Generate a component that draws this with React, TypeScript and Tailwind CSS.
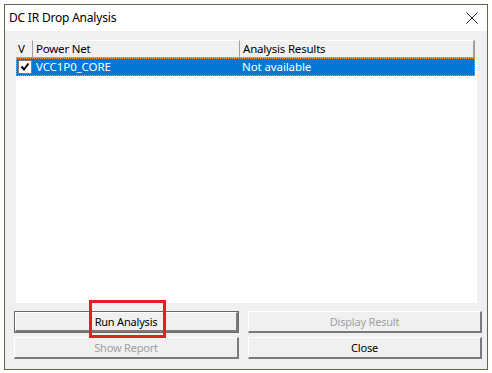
const font = "font-['Segoe_UI','Noto_Sans','Liberation_Sans',sans-serif]";

const WinButton = ({
  label,
  width,
  disabled,
  isDefault,
}: {
  label: string;
  width: string;
  disabled?: boolean;
  isDefault?: boolean;
}) => {
  return (
    <div
      className={`${width} h-[22px] ${isDefault ? "border border-[#696969]" : ""} bg-[#f0f0f0]`}
    >
      <div className="h-full w-full border-t border-l border-white border-b-2 border-r-2 border-b-[#7a7a7a] border-r-[#7a7a7a] flex items-center justify-center">
        <span
          className={`text-[11px] tracking-[-0.2px] leading-none ${disabled ? "text-[#a0a0a0]" : "text-black"}`}
        >
          {label}
        </span>
      </div>
    </div>
  );
};

const App = () => {
  return (
    <div className={`w-[492px] h-[373px] bg-white relative ${font}`}>
      <div className="absolute left-[4px] top-[4px] w-[484px] h-[366px] border border-[#5d6d42] flex flex-col">
        {/* title bar */}
        <div className="h-[26px] bg-white flex items-center justify-between pl-[4px] pr-[9px]">
          <span className="text-[12px] tracking-[-0.2px] text-black">DC IR Drop Analysis</span>
          <svg width="12" height="12" viewBox="0 0 12 12">
            <path d="M0.5 0.5 L11.5 11.5 M11.5 0.5 L0.5 11.5" stroke="#222" strokeWidth="1" />
          </svg>
        </div>
        {/* body */}
        <div className="flex-1 bg-[#f0f0f0] flex flex-col pt-[9px] pl-[11px]">
          <div className="w-[461px] h-[263px] bg-white flex flex-col">
            <div className="h-[18px] flex text-[11.5px] tracking-[-0.2px] bg-[#f0f0f0]">
              <div className="w-[17px] pl-[2px] border-r border-[#a0a0a0] border-b border-b-[#a0a0a0] border-t border-t-white flex items-center">V</div>
              <div className="w-[207px] pl-[3px] border-r border-[#a0a0a0] border-b border-b-[#a0a0a0] border-t border-t-white flex items-center">Power Net</div>
              <div className="w-[235px] pl-[3px] border-r-2 border-[#a0a0a0] border-b border-b-[#a0a0a0] border-t border-t-white flex items-center">Analysis Results</div>
            </div>
            <div className="h-[18px] w-[459px] bg-[#0078d7] border border-dotted border-[#f39a3c] flex items-center text-white text-[11.5px] tracking-[-0.1px]">
              <div className="w-[16px] flex items-center justify-center">
                <div className="w-[14px] h-[14px] bg-white border border-[#7a7a7a] flex items-center justify-center">
                  <svg width="10" height="10" viewBox="0 0 10 10">
                    <path d="M1.5 4.5 L4 7.5 L8.5 1.5" stroke="#000" strokeWidth="2" fill="none" />
                  </svg>
                </div>
              </div>
              <div className="w-[207px] pl-[3px]">VCC1P0_CORE</div>
              <div className="pl-[2px]">Not available</div>
            </div>
          </div>
          <div className="mt-[8px] flex gap-[9px] ml-[-2px]">
            <WinButton label="Run Analysis" width="w-[225px]" isDefault />
            <WinButton label="Display Result" width="w-[234px]" disabled />
          </div>
          <div className="mt-[4px] flex gap-[9px] ml-[-2px]">
            <WinButton label="Show Report" width="w-[225px]" disabled />
            <WinButton label="Close" width="w-[234px]" />
          </div>
        </div>
      </div>
      {/* annotation */}
      <div className="absolute left-[89px] top-[300px] w-[77px] h-[38px] border-[3px] border-[#e81c24]" />
    </div>
  );
};

export default App;
